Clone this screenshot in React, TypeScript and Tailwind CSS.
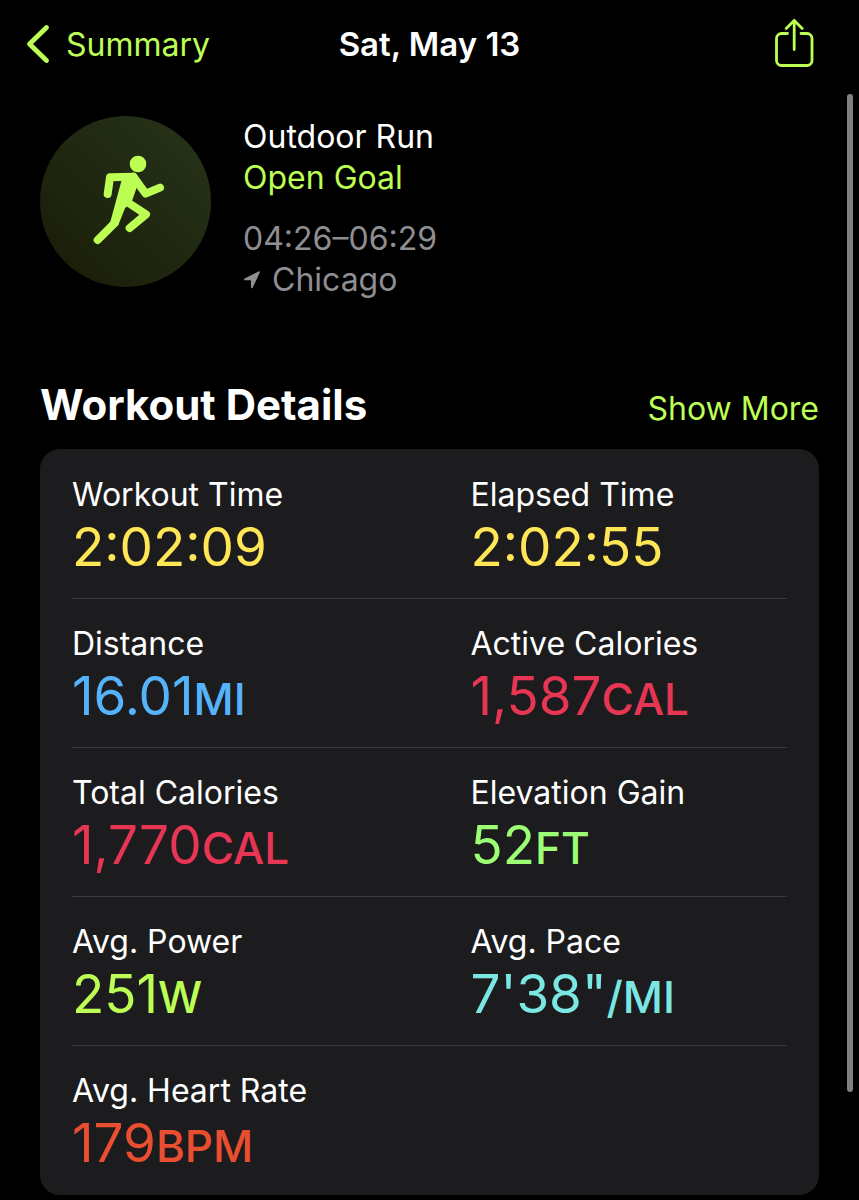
import React from 'react';

interface Metric {
  label: string;
  value: string;
  unit?: string;
  color: string;
}

const metrics: Metric[] = [
  { label: 'Workout Time', value: '2:02:09', color: 'text-[#fee657]' },
  { label: 'Elapsed Time', value: '2:02:55', color: 'text-[#fee657]' },
  { label: 'Distance', value: '16.01', unit: 'MI', color: 'text-[#55b3fc]' },
  { label: 'Active Calories', value: '1,587', unit: 'CAL', color: 'text-[#e73554]' },
  { label: 'Total Calories', value: '1,770', unit: 'CAL', color: 'text-[#e73554]' },
  { label: 'Elevation Gain', value: '52', unit: 'FT', color: 'text-[#9dfe75]' },
  { label: 'Avg. Power', value: '251', unit: 'W', color: 'text-[#bdfe55]' },
  { label: 'Avg. Pace', value: `7'38"`, unit: '/MI', color: 'text-[#7be7e3]' },
  { label: 'Avg. Heart Rate', value: '179', unit: 'BPM', color: 'text-[#ea4e30]' },
];

// Two metrics per row
const rows: Metric[][] = [];
for (let i = 0; i < metrics.length; i += 2) {
  rows.push(metrics.slice(i, i + 2));
}

const BackIcon = () => (
  <svg width="26" height="40" viewBox="0 0 26 40" fill="none" aria-hidden="true">
    <path
      d="M22.5 3.5 5.5 20l17 16.5"
      stroke="currentColor"
      strokeWidth="4.8"
      strokeLinecap="round"
      strokeLinejoin="round"
    />
  </svg>
);

const ShareIcon = () => (
  <svg width="40" height="52" viewBox="0 0 40 52" fill="none" aria-hidden="true">
    <path
      d="M12.500 15.500H6.500a5 5 0 0 0-5 5v22a5 5 0 0 0 5 5H32a5 5 0 0 0 5-5v-22a5 5 0 0 0-5-5h-6M19.200 31.500V2.500M11.200 10.500l8-8 8 8"
      stroke="currentColor"
      strokeWidth="2.8"
      strokeLinecap="round"
      strokeLinejoin="round"
    />
  </svg>
);

const RunnerIcon = () => (
  <svg width="76" height="96" viewBox="-12 -3 228 288" className="overflow-visible" fill="none" aria-hidden="true">
    <circle cx="138" cy="27" r="25" fill="currentColor" />
    <path d="M88 79 126 53l8 45-14 40-21 22-21 52-23-12Z" fill="currentColor" />
    <g stroke="currentColor" strokeWidth="24" strokeLinecap="round" strokeLinejoin="round">
      <path d="M124 65 54 67l-7 50" />
      <path d="m124 65 37 51 43-18" />
      <path d="m110 144 52 34-49 41" />
      <path d="m67 205-50 50" />
    </g>
  </svg>
);

const LocationIcon = () => (
  <svg width="17" height="19" viewBox="0 0 17 19" fill="currentColor" aria-hidden="true">
    <path d="M15.9 1.200 1.500 8.400c-.9.500-.6 1.900.4 1.900h5.600c.3 0 .5.200.5.500v6.500c0 1.100 1.300 1.300 1.700.4l7.100-15.200c.3-.8-.2-1.600-.9-1.300Z" />
  </svg>
);

const MetricCell: React.FC<{ metric: Metric }> = ({ metric }) => (
  <div>
    <dt className="text-[32px] leading-[41px] text-white">{metric.label}</dt>
    <dd className={`text-[53px] leading-[64px] ${metric.color}`}>
      {metric.value}
      {metric.unit && <span className="text-[44px] leading-none font-medium">{metric.unit}</span>}
    </dd>
  </div>
);

export default function App() {
  return (
    <div className="relative min-h-screen bg-black font-['Inter',sans-serif] text-white">
      {/* Navigation bar */}
      <header className="grid h-[88px] grid-cols-[1fr_auto_1fr] items-center px-6 text-[32px] leading-[41px]">
        <a href="#summary" className="flex items-center gap-4 text-[#bdfe55]">
          <BackIcon />
          Summary
        </a>
        <h1 className="text-[33px] font-semibold">Sat, May 13</h1>
        <button type="button" aria-label="Share" className="mr-5 justify-self-end text-[#bdfe55]">
          <ShareIcon />
        </button>
      </header>

      <main className="px-10">
        {/* Workout overview */}
        <section className="flex items-start gap-8 pt-7">
          <div className="flex size-[171px] shrink-0 items-center justify-center rounded-full bg-linear-to-tr from-[#191c08] to-[#27341a] text-[#bdfe55]">
            <RunnerIcon />
          </div>
          <div className="text-[32px] leading-[41px]">
            <h2>Outdoor Run</h2>
            <p className="text-[#bdfe55]">Open Goal</p>
            <p className="mt-5 text-[#8e8e93]">04:26–06:29</p>
            <p className="flex items-center gap-3 text-[#8e8e93]">
              <LocationIcon />
              Chicago
            </p>
          </div>
        </section>

        {/* Workout details */}
        <section className="pt-[78px]">
          <div className="flex items-baseline justify-between pb-[18px]">
            <h2 className="text-[42px] leading-[53px] font-bold">Workout Details</h2>
            <button type="button" className="text-[32px] leading-[41px] text-[#bdfe55]">
              Show More
            </button>
          </div>
          <dl className="divide-y divide-[#38383a] rounded-[20px] bg-[#1c1c1e] py-px">
            {rows.map((row) => (
              <div key={row[0].label} className="mx-8 grid grid-cols-2 gap-[82px] pt-6 pb-[19px]">
                {row.map((metric) => (
                  <MetricCell key={metric.label} metric={metric} />
                ))}
              </div>
            ))}
          </dl>
        </section>
      </main>

      {/* Scroll indicator */}
      <div className="absolute top-[94px] right-1.5 bottom-[108px] w-1.5 rounded-full bg-[#808080]" />
    </div>
  );
}
